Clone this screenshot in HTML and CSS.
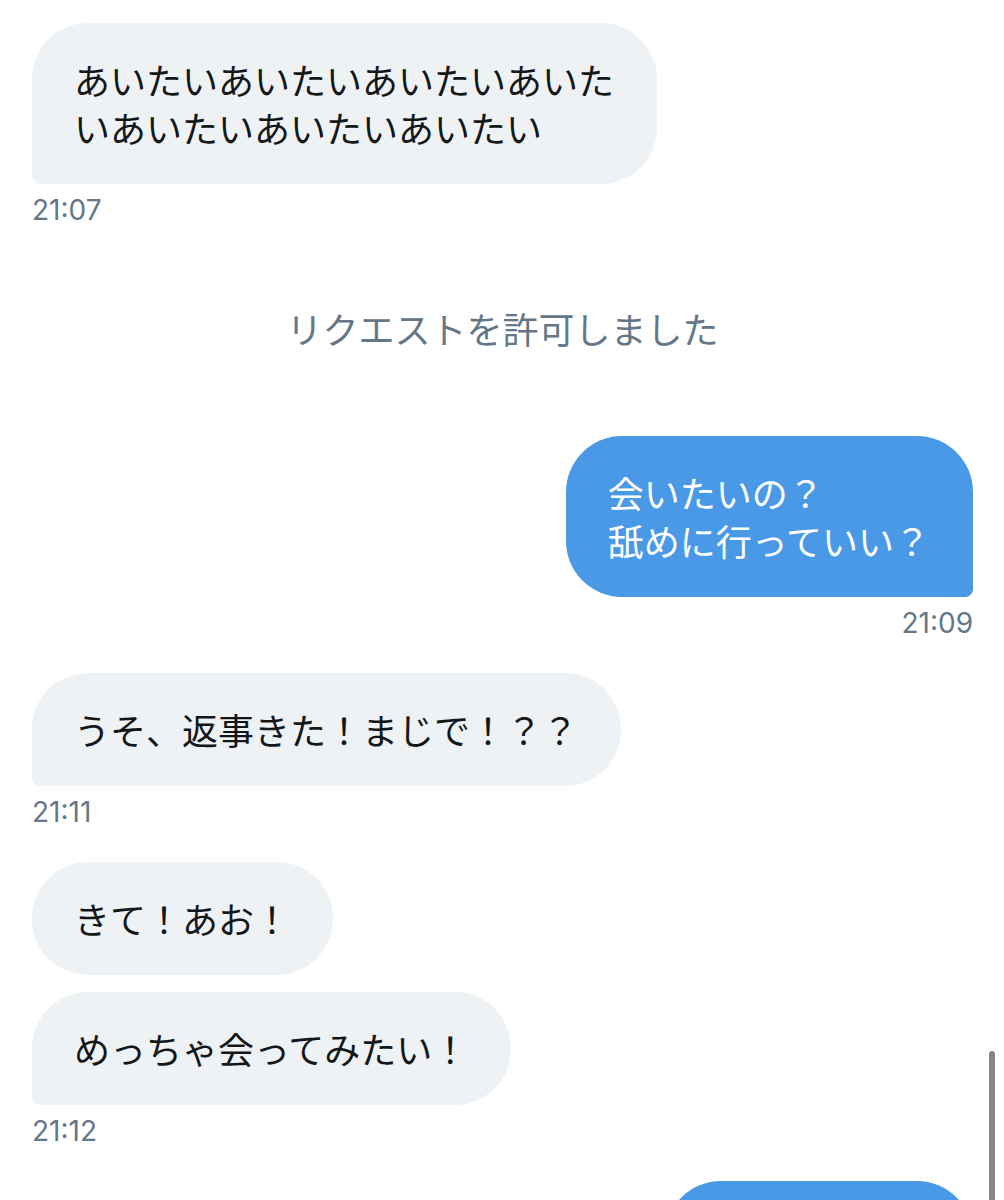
FILE: index.html
```html
<!DOCTYPE html>
<html lang="ja">
  <head>
    <meta charset="UTF-8" />
    <meta name="viewport" content="width=device-width, initial-scale=1.0" />
    <title>メッセージ</title>
    <link rel="stylesheet" href="styles.css">
  </head>
  <body>
    <div class="chat">
      <div class="msg in">
        <div class="bubble tail">あいたいあいたいあいたいあいた<br />いあいたいあいたいあいたい</div>
        <div class="time">21:07</div>
      </div>

      <div class="notice">リクエストを許可しました</div>

      <div class="msg out">
        <div class="bubble tail">会いたいの？<br />舐めに行っていい？</div>
        <div class="time">21:09</div>
      </div>

      <div class="msg in">
        <div class="bubble tail">うそ、返事きた！まじで！？？</div>
        <div class="time">21:11</div>
      </div>

      <div class="msg in">
        <div class="bubble">きて！あお！</div>
        <div class="bubble tail">めっちゃ会ってみたい！</div>
        <div class="time">21:12</div>
      </div>

      <div class="msg out">
        <div class="bubble stub"></div>
      </div>
    </div>
    <div class="scrollbar"></div>
  </body>
</html>
```

FILE: styles.css
```css
* {
  margin: 0;
  padding: 0;
  box-sizing: border-box;
}
html,
body {
  height: 1200px;
  overflow: hidden;
  background-color: #ffffff;
}
body {
  position: relative;
  font-family: "Noto Sans CJK JP", "Noto Sans", sans-serif;
  color: #14171a;
}
.chat {
  display: flex;
  flex-direction: column;
  gap: 32px;
  padding: 23px 31px 0 32px;
}
.msg {
  display: flex;
  flex-direction: column;
  gap: 17px;
}
.msg.in {
  align-items: flex-start;
}
.msg.out {
  align-items: flex-end;
}
.bubble {
  font-size: 36px;
  line-height: 48px;
  padding: 32px 43px 33px 42px;
  border-radius: 56px;
  background-color: #eff2f4;
  white-space: nowrap;
}
.out .bubble {
  background-color: #4a99e7;
  color: #ffffff;
}
.in .bubble.tail {
  border-bottom-left-radius: 8px;
}
.out .bubble.tail {
  border-bottom-right-radius: 8px;
}
.bubble.stub {
  width: 308px;
  height: 112px;
}
.time {
  font-family: "Inter", "Liberation Sans", sans-serif;
  font-size: 28px;
  line-height: 36px;
  color: #657786;
  margin-top: -9px;
}
.notice {
  text-align: center;
  font-size: 36px;
  line-height: 48px;
  color: #657786;
  margin: 44px 0 52px;
}
.scrollbar {
  position: absolute;
  left: 989px;
  top: 1051px;
  width: 6px;
  height: 170px;
  border-radius: 3px;
  background-color: #858585;
}
```
